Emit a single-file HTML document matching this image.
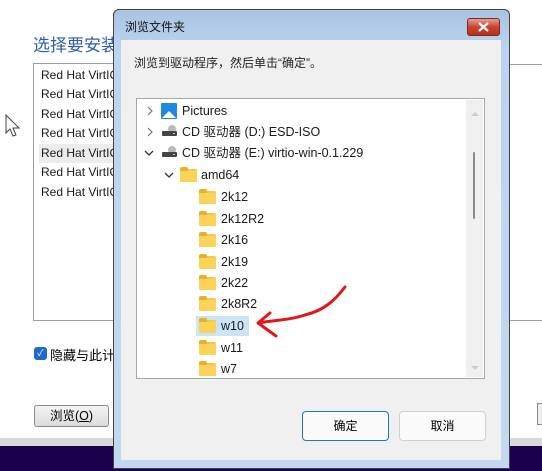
<!DOCTYPE html><html><head><meta charset="utf-8"><style>
*{margin:0;padding:0;box-sizing:border-box}
body{width:542px;height:471px;overflow:hidden;background:#fff;position:relative;font-family:"Liberation Sans","Noto Sans CJK SC",sans-serif;font-size:12px;color:#000}
.a{position:absolute}
.it{position:absolute;left:41px;font-size:12px;color:#1a1a1a}
.row{position:absolute;height:20px;line-height:20px;font-size:12.5px;color:#1a1a1a;white-space:nowrap}
.fold{position:absolute;width:17px;height:13px;background:#f8c840;border-radius:2px}
.fold:before{content:"";position:absolute;left:0;top:-2px;width:8px;height:4px;background:#e8b02c;border-radius:2px 2px 0 0}
.fold:after{content:"";position:absolute;left:0;top:2px;width:17px;height:11px;background:#fbd35a;border-radius:1px}
</style></head><body>
<div class="a" style="left:33px;top:31px;font-size:17px;color:#2f5eae">选择要安装</div>
<div class="a" style="left:33px;top:63px;width:100px;height:258px;border:1px solid #a0a0a0;border-right:none"></div>
<div class="a" style="left:509px;top:64px;width:33px;height:1px;background:#a0a0a0"></div>
<div class="a" style="left:509px;top:320px;width:33px;height:1px;background:#a0a0a0"></div>
<div class="a" style="left:39px;top:144px;width:80px;height:19px;background:#ececec"></div>
<div class="it" style="top:68px">Red Hat VirtIO</div>
<div class="it" style="top:87px">Red Hat VirtIO</div>
<div class="it" style="top:107px">Red Hat VirtIO</div>
<div class="it" style="top:126px">Red Hat VirtIO</div>
<div class="it" style="top:146px">Red Hat VirtIO</div>
<div class="it" style="top:165px">Red Hat VirtIO</div>
<div class="it" style="top:185px">Red Hat VirtIO</div>
<svg class="a" style="left:5px;top:114px" width="16" height="24"><path d="M1 1 L1 19 L5 15 L8 22 L11 21 L8 14 L14 14 Z" fill="#fff" stroke="#444" stroke-width="1"/></svg>
<div class="a" style="left:34px;top:347px;width:13px;height:13px;background:#1e6cc8;border-radius:3px;color:#fff;font-size:9px;text-align:center;line-height:13px">✓</div>
<div class="a" style="left:50px;top:345px;font-size:13px">隐藏与此计</div>
<div class="a" style="left:34px;top:405px;width:75px;height:22px;border:1px solid #8a8a8a;border-radius:3px;background:linear-gradient(#f4f4f4,#dcdcdc);text-align:center;line-height:20px;font-size:12.5px">浏览(<u>O</u>)</div>
<div class="a" style="left:0;top:438px;width:542px;height:8px;background:#d9d9d9"></div>
<div class="a" style="left:0;top:446px;width:542px;height:25px;background:#1b0050"></div>
<div class="a" style="left:537px;top:403px;width:5px;height:22px;border:1px solid #8a8a8a;border-right:none;background:#eee"></div>
<div class="a" style="left:113px;top:9px;width:397px;height:460px;border:1px solid #444;border-radius:6px 6px 0 0;background:linear-gradient(#a9c3e2,#bcd4ef 40px,#c3d8f0)"></div>
<div class="a" style="left:125px;top:18px;font-size:12px;color:#111">浏览文件夹</div>
<div class="a" style="left:467px;top:18px;width:33px;height:18px;border:1px solid #7a2a20;border-radius:3px;background:linear-gradient(#e6a090,#c8442e 50%,#b83020)"></div>
<svg class="a" style="left:478px;top:22px" width="11" height="10"><path d="M1 1 L10 9 M10 1 L1 9" stroke="#fff" stroke-width="2.2"/></svg>
<div class="a" style="left:121px;top:40px;width:380px;height:420px;background:#f0f0f0"></div>
<div class="a" style="left:134px;top:54px;font-size:12px;color:#222">浏览到驱动程序，然后单击“确定”。</div>
<div class="a" style="left:136px;top:98px;width:349px;height:281px;background:#fff;border:1px solid #a8a8a8"></div>
<div class="a" style="left:466px;top:100px;width:17px;height:277px;background:#f0f0f0"></div>
<div class="a" style="left:473px;top:152px;width:2px;height:67px;background:#8a8a8a;border-radius:1px"></div>
<div class="a" style="left:471px;top:108px;border:4px solid transparent;border-bottom:4px solid #ccc"></div>
<div class="a" style="left:471px;top:366px;border:4px solid transparent;border-top:4px solid #ccc"></div>
<div class="a" style="left:196px;top:316px;width:53px;height:20px;background:#cce4f7"></div>
<svg class="a" style="left:146px;top:106px" width="8" height="10"><path d="M2 1 L6 5 L2 9" fill="none" stroke="#777" stroke-width="1.2"/></svg>
<svg class="a" style="left:146px;top:127px" width="8" height="10"><path d="M2 1 L6 5 L2 9" fill="none" stroke="#777" stroke-width="1.2"/></svg>
<svg class="a" style="left:144px;top:149px" width="10" height="8"><path d="M1 2 L5 6 L9 2" fill="none" stroke="#333" stroke-width="1.3"/></svg>
<svg class="a" style="left:164px;top:171px" width="10" height="8"><path d="M1 2 L5 6 L9 2" fill="none" stroke="#333" stroke-width="1.3"/></svg>
<svg class="a" style="left:161px;top:103px" width="16" height="16"><rect width="16" height="16" rx="1" fill="#1e88e5"/><path d="M1 15 L8 8 L15 15Z" fill="#fff"/></svg>
<svg class="a" style="left:161px;top:124px" width="17" height="14"><circle cx="11" cy="5" r="4" fill="#bbb"/><rect x="1" y="7" width="15" height="5" rx="1" fill="#444"/><rect x="12" y="9" width="2" height="1" fill="#6f6"/></svg>
<svg class="a" style="left:161px;top:145px" width="17" height="14"><circle cx="11" cy="5" r="4" fill="#bbb"/><rect x="1" y="7" width="15" height="5" rx="1" fill="#444"/><rect x="12" y="9" width="2" height="1" fill="#6f6"/></svg>
<div class="row" style="left:182px;top:101px">Pictures</div>
<div class="row" style="left:182px;top:122px">CD 驱动器 (D:) ESD-ISO</div>
<div class="row" style="left:182px;top:143px">CD 驱动器 (E:) virtio-win-0.1.229</div>
<div class="fold" style="left:180px;top:169px"></div><div class="row" style="left:201px;top:165px">amd64</div>
<div class="fold" style="left:199px;top:191px"></div><div class="row" style="left:221px;top:187px">2k12</div>
<div class="fold" style="left:199px;top:213px"></div><div class="row" style="left:221px;top:209px">2k12R2</div>
<div class="fold" style="left:199px;top:234px"></div><div class="row" style="left:221px;top:230px">2k16</div>
<div class="fold" style="left:199px;top:256px"></div><div class="row" style="left:221px;top:252px">2k19</div>
<div class="fold" style="left:199px;top:277px"></div><div class="row" style="left:221px;top:273px">2k22</div>
<div class="fold" style="left:199px;top:298px"></div><div class="row" style="left:221px;top:294px">2k8R2</div>
<div class="fold" style="left:199px;top:320px"></div><div class="row" style="left:221px;top:316px">w10</div>
<div class="fold" style="left:199px;top:342px"></div><div class="row" style="left:221px;top:338px">w11</div>
<div class="fold" style="left:199px;top:363px"></div><div class="row" style="left:221px;top:359px;height:18px;overflow:hidden">w7</div>
<svg class="a" style="left:250px;top:280px" width="110" height="70"><path d="M95 7 C85 20,75 30,55 35 C40 40,25 40,8 43 M8 43 L20 33 M8 43 L26 56" fill="none" stroke="#e01818" stroke-width="3" stroke-linecap="round"/></svg>
<div class="a" style="left:302px;top:411px;width:87px;height:30px;border:1px solid #1e74d0;border-radius:4px;background:#fbfbfb;text-align:center;line-height:28px;font-size:12px">确定</div>
<div class="a" style="left:399px;top:411px;width:87px;height:30px;border:1px solid #d0d0d0;border-radius:4px;background:#fbfbfb;text-align:center;line-height:28px;font-size:12px">取消</div>
</body></html>
